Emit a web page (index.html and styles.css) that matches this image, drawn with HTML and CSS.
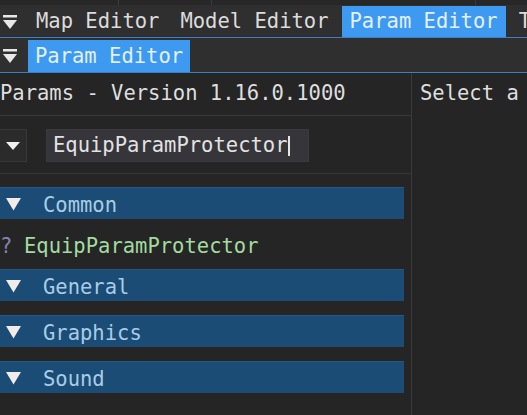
FILE: index.html
```html
<!DOCTYPE html>
<html>
<head>
<meta charset="utf-8">
<link rel="stylesheet" href="styles.css">
</head>
<body>
<div class="app">
  <div class="topstrip">
    <span class="tick t1"></span><span class="tick t2"></span><span class="tick t3"></span>
  </div>
  <div class="tabbar first">
    <span class="menubtn"><svg width="16" height="18" viewBox="0 0 16 18"><rect x="1" y="2" width="14" height="2.5" fill="#e8e8e8"/><polygon points="1,7 15,7 8,16" fill="#e8e8e8"/></svg></span>
    <span class="tab">Map Editor</span>
    <span class="tab">Model Editor</span>
    <span class="tab active">Param Editor</span>
    <span class="tab">T</span>
  </div>
  <div class="tabbar second">
    <span class="menubtn"><svg width="16" height="18" viewBox="0 0 16 18"><rect x="1" y="2" width="14" height="2.5" fill="#e8e8e8"/><polygon points="1,7 15,7 8,16" fill="#e8e8e8"/></svg></span>
    <span class="tab active">Param Editor</span>
  </div>
  <div class="main">
    <div class="left">
      <div class="title">Params - Version 1.16.0.1000</div>
      <div class="search">
        <span class="ddbtn"><svg width="16" height="12" viewBox="0 0 16 12"><polygon points="1,2 15,2 8,10" fill="#f0f0f0"/></svg></span>
        <span class="input">EquipParamProtector<span class="caret"></span></span>
      </div>
      <div class="list">
        <div class="header"><svg class="arr" width="15" height="14" viewBox="0 0 15 14"><polygon points="0,1 15,1 7.5,13.5" fill="#f2ece8"/></svg><span>Common</span></div>
        <div class="item"><span class="q">?</span><span class="name">EquipParamProtector</span></div>
        <div class="header"><svg class="arr" width="15" height="14" viewBox="0 0 15 14"><polygon points="0,1 15,1 7.5,13.5" fill="#f2ece8"/></svg><span>General</span></div>
        <div class="header"><svg class="arr" width="15" height="14" viewBox="0 0 15 14"><polygon points="0,1 15,1 7.5,13.5" fill="#f2ece8"/></svg><span>Graphics</span></div>
        <div class="header"><svg class="arr" width="15" height="14" viewBox="0 0 15 14"><polygon points="0,1 15,1 7.5,13.5" fill="#f2ece8"/></svg><span>Sound</span></div>
      </div>
    </div>
    <div class="right">
      <div class="title">Select a</div>
    </div>
  </div>
</div>
</body>
</html>
```
FILE: styles.css
```css
html, body {
  margin: 0;
  padding: 0;
  background: #252525;
  overflow: hidden;
}
.app {
  width: 527px;
  height: 415px;
  font-family: "DejaVu Sans Mono", "Liberation Mono", monospace;
  font-size: 20.5px;
  color: #dedede;
  display: flex;
  flex-direction: column;
}
.topstrip {
  height: 5px;
  background: #272727;
  position: relative;
}
.tick {
  position: absolute;
  top: 0;
  width: 1px;
  height: 5px;
  background: #3a3a3a;
}
.t1 { left: 118px; }
.t2 { left: 211px; }
.t3 { left: 475px; }
.tabbar {
  height: 32px;
  background: #2f2f2f;
  border-bottom: 1px solid #3b7fc4;
  display: flex;
  align-items: flex-end;
  white-space: nowrap;
}
.tabbar.second {
  height: 34px;
  border-bottom: 1px solid #3b7fc4;
}
.menubtn {
  width: 20px;
  flex-shrink: 0;
  height: 100%;
  display: flex;
  align-items: center;
  justify-content: center;
  margin-right: 8px;
}
.menubtn svg { margin-top: 2px; }
.tabbar .tab {
  height: 31px;
  line-height: 31px;
  padding: 0 7px;
  color: #dcdcdc;
}
.tabbar.first .tab {
  padding: 0 8px;
  margin-right: 5px;
}
.tabbar .tab.active {
  background: #3d9af0;
  color: #e4f0fb;
}
.tabbar.second .tab {
  height: 32px;
  line-height: 32px;
}
.main {
  flex: 1;
  display: flex;
}
.left {
  width: 411px;
  border-right: 1px solid #3a3a3a;
  display: flex;
  flex-direction: column;
}
.right {
  flex: 1;
  padding-left: 8px;
}
.title {
  height: 42px;
  line-height: 40px;
  border-bottom: 1px solid #3a3a3a;
  white-space: nowrap;
}
.right .title {
  border-bottom: none;
}
.search {
  height: 57px;
  border-bottom: 1px solid #363636;
  display: flex;
  align-items: center;
  gap: 19px;
}
.ddbtn {
  width: 27px;
  height: 33px;
  margin-top: 2px;
  background: #2b2b2b;
  border: 1px solid #383838;
  border-left: none;
  box-sizing: border-box;
  display: flex;
  align-items: center;
  justify-content: center;
}
.input {
  width: 263px;
  height: 33px;
  margin-top: 2px;
  background: #35353a;
  border: 1px solid #3a3a3e;
  box-sizing: border-box;
  padding-left: 6px;
  line-height: 31px;
  display: flex;
  align-items: center;
  color: #e2e2e2;
}
.caret {
  width: 2px;
  height: 20px;
  background: #e6e6e6;
}
.list {
  padding-top: 13px;
  display: flex;
  flex-direction: column;
}
.header {
  width: 404px;
  height: 32px;
  background: #1a4c75;
  border-top: 1px solid #245883;
  box-sizing: border-box;
  display: flex;
  align-items: center;
  color: #a9cce6;
  margin-bottom: 14px;
}
.header span {
  margin-top: 2px;
}
.header .arr {
  margin-left: 6px;
  margin-right: 22px;
}
.item {
  height: 50px;
  margin-top: -14px;
  display: flex;
  align-items: center;
  padding-top: 4px;
  box-sizing: border-box;
  white-space: nowrap;
}
.item .q {
  color: #8a80b0;
  width: 24px;
}
.item .name {
  color: #a3dba0;
}
```
